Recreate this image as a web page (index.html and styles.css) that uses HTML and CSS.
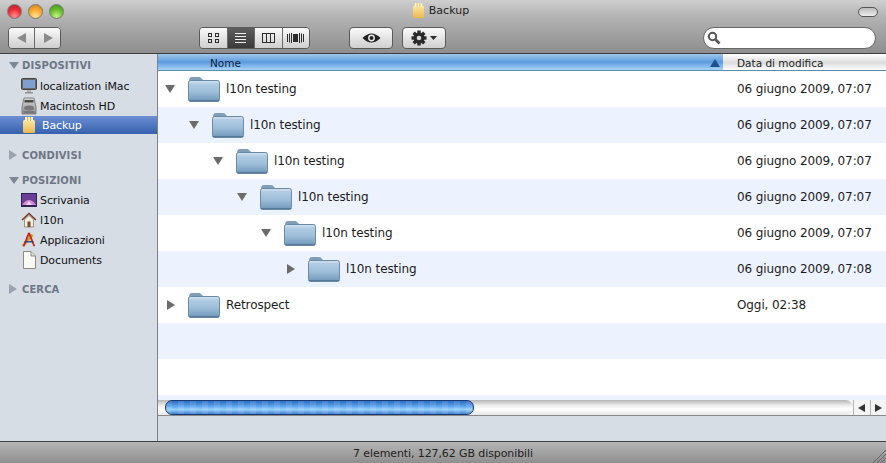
FILE: index.html
```html
<!DOCTYPE html>
<html lang="it">
<head>
  <meta charset="UTF-8" />
  <title>Backup</title>
  <link rel="stylesheet" href="styles.css">
</head>
<body>

<svg class="defs" width="0" height="0" aria-hidden="true">
  <defs>
    <linearGradient id="folderBody" x1="0" y1="0" x2="0" y2="1">
      <stop offset="0" stop-color="#b9d2e6"/>
      <stop offset="0.55" stop-color="#9dbdd8"/>
      <stop offset="1" stop-color="#6f97bb"/>
    </linearGradient>
    <linearGradient id="diskBody" x1="0" y1="0" x2="0" y2="1">
      <stop offset="0" stop-color="#fbe7a6"/>
      <stop offset="1" stop-color="#ecb84e"/>
    </linearGradient>
    <linearGradient id="hdBody" x1="0" y1="0" x2="0" y2="1">
      <stop offset="0" stop-color="#d8d8d8"/>
      <stop offset="1" stop-color="#8f8f8f"/>
    </linearGradient>
    <symbol id="folder" viewBox="0 0 32 26">
      <path d="M1 5 Q1 1 4 1 H11 Q13 1 14 3 L15 4 H29 Q31 4 31 6 V8 H1 Z" fill="#7f9db6"/>
      <rect x="0.5" y="4.5" width="31" height="21" rx="2" fill="url(#folderBody)" stroke="#6d8ba6"/>
      <path d="M1.5 6 H30.5" stroke="#d6e6f2"/>
      <path d="M1 24.6 H31" stroke="#4f7396"/>
    </symbol>
    <symbol id="disk" viewBox="0 0 14 18">
      <rect x="1" y="4" width="12" height="13" rx="1.5" fill="url(#diskBody)"/>
      <rect x="3" y="1" width="8" height="4" fill="#fff3c8"/>
      <rect x="5" y="1" width="1" height="4" fill="#d9b45e"/>
      <rect x="8" y="1" width="1" height="4" fill="#d9b45e"/>
    </symbol>
  </defs>
</svg>

<div class="window">

  <header class="toolbar">
    <div class="titlerow">
      <div class="lights">
        <span class="light red"></span>
        <span class="light amber"></span>
        <span class="light green"></span>
      </div>
      <div class="title">
        <svg class="title-icon" width="13" height="17"><use href="#disk"/></svg>
        Backup
      </div>
      <div class="pill-wrap"><span class="pill"></span></div>
    </div>

    <div class="toolrow">
      <div class="btn-group nav">
        <button class="btn"><svg width="12" height="12" viewBox="0 0 12 12"><path d="M10 1 V11 L1 6 Z" fill="#8b8b8b"/></svg></button>
        <button class="btn"><svg width="12" height="12" viewBox="0 0 12 12"><path d="M2 1 V11 L11 6 Z" fill="#8b8b8b"/></svg></button>
      </div>

      <div class="btn-group views">
        <button class="btn">
          <svg width="13" height="12" viewBox="0 0 13 12" fill="none" stroke="#2c2c2c"><rect x="1.5" y="1.5" width="3" height="3"/><rect x="8.5" y="1.5" width="3" height="3"/><rect x="1.5" y="7.5" width="3" height="3"/><rect x="8.5" y="7.5" width="3" height="3"/></svg>
        </button>
        <button class="btn active">
          <svg width="13" height="12" viewBox="0 0 13 12" stroke="#f2f2f2"><path d="M1 1.5 H12 M1 4.5 H12 M1 7.5 H12 M1 10.5 H12"/></svg>
        </button>
        <button class="btn">
          <svg width="15" height="12" viewBox="0 0 15 12" fill="none" stroke="#2c2c2c"><rect x="1.5" y="1.5" width="12" height="9"/><path d="M5.5 1.5 V10.5 M9.5 1.5 V10.5"/></svg>
        </button>
        <button class="btn">
          <svg width="17" height="12" viewBox="0 0 17 12" fill="#2c2c2c"><rect x="0" y="2" width="1" height="8"/><rect x="2" y="1.500" width="1" height="9"/><rect x="4" y="1" width="1" height="10"/><rect x="6" y="2" width="5" height="8"/><rect x="12" y="1" width="1" height="10"/><rect x="14" y="1.500" width="1" height="9"/><rect x="16" y="2" width="1" height="8"/></svg>
        </button>
      </div>

      <button class="btn single eye">
        <svg width="19" height="12" viewBox="0 0 19 12"><path d="M0.5 6 Q9.5 -3 18.500 6 Q9.5 15 0.5 6 Z" fill="#222"/><circle cx="9.5" cy="6" r="3.4" fill="#eee"/><circle cx="9.5" cy="6" r="2" fill="#222"/></svg>
      </button>

      <button class="btn single gear">
        <svg width="16" height="16" viewBox="0 0 16 16"><g fill="#2a2a2a"><circle cx="8" cy="8" r="5.500"/><rect x="6.300" y="0.500" width="3.400" height="15"/><rect x="6.300" y="0.500" width="3.400" height="15" transform="rotate(45 8 8)"/><rect x="6.300" y="0.500" width="3.400" height="15" transform="rotate(90 8 8)"/><rect x="6.300" y="0.500" width="3.400" height="15" transform="rotate(135 8 8)"/></g><circle cx="8" cy="8" r="2.300" fill="#d8d8d8"/></svg>
        <svg width="7" height="4" viewBox="0 0 7 4"><path d="M0 0 H7 L3.500 4 Z" fill="#2a2a2a"/></svg>
      </button>

      <div class="search">
        <svg width="14" height="14" viewBox="0 0 14 14" fill="none" stroke="#555"><circle cx="5.500" cy="5.500" r="3.700" stroke-width="2"/><path d="M8.500 8.500 L12.500 12.500" stroke-width="2.600"/></svg>
      </div>
    </div>
  </header>

  <div class="main">
    <aside class="sidebar">
      <div class="sb-head first"><span class="tri-down"></span>DISPOSITIVI</div>
      <div class="sb-item">
        <svg width="16" height="16" viewBox="0 0 16 16"><rect x="0.500" y="0.500" width="15" height="11" rx="1" fill="#6a6a6a" stroke="#444"/><rect x="2" y="2" width="12" height="8" fill="#7f9fd0"/><rect x="6" y="12" width="4" height="2" fill="#b5b5b5"/><rect x="4" y="14" width="8" height="1.500" fill="#8f8f8f"/></svg>
        localization iMac
      </div>
      <div class="sb-item">
        <svg width="16" height="18" viewBox="0 0 16 18"><path d="M3 1 H13 L15 10 V17 H1 V10 Z" fill="url(#hdBody)" stroke="#6e6e6e" stroke-width="0.800"/><rect x="3.500" y="3" width="9" height="2.500" fill="#4a4a4a"/><ellipse cx="8" cy="11" rx="5" ry="2.500" fill="#777"/><rect x="2.500" y="14.500" width="11" height="1" fill="#555"/></svg>
        Macintosh HD
      </div>
      <div class="sb-item selected">
        <svg width="14" height="18"><use href="#disk"/></svg>
        Backup
      </div>

      <div class="sb-head condivisi"><span class="tri-right"></span>CONDIVISI</div>

      <div class="sb-head posizioni"><span class="tri-down"></span>POSIZIONI</div>
      <div class="sb-item">
        <svg width="16" height="14" viewBox="0 0 16 14"><rect width="16" height="14" fill="#2b2350"/><rect x="1" y="1" width="14" height="11" fill="#6b3f96"/><path d="M1 12 Q8 2 15 12 Z" fill="#d68ad0"/><path d="M5 12 L8 8 L11 12 Z" fill="#f1d2ee"/></svg>
        Scrivania
      </div>
      <div class="sb-item">
        <svg width="16" height="16" viewBox="0 0 16 16"><path d="M1 8 L8 1.500 L15 8" fill="none" stroke="#7a3a22" stroke-width="1.600"/><path d="M3.500 7.500 L8 3.500 L12.500 7.500 V15 H3.500 Z" fill="#f2ede0" stroke="#6a5a48" stroke-width="0.600"/><rect x="6.500" y="9.500" width="3" height="5.500" fill="#7a4a28"/></svg>
        l10n
      </div>
      <div class="sb-item">
        <svg width="16" height="16" viewBox="0 0 18 18"><path d="M2 16 L13 3" stroke="#c9a336" stroke-width="3"/><path d="M9 1 L3 16 M9 1 L15 16" stroke="#c8241e" stroke-width="2" fill="none"/><path d="M4 11 H14" stroke="#3a3a6a" stroke-width="1.500"/></svg>
        Applicazioni
      </div>
      <div class="sb-item">
        <svg width="14" height="18" viewBox="0 0 14 18"><path d="M1.500 0.500 H9 L13.500 5 V17.500 H1.500 Z" fill="#fbfaf2" stroke="#8a8a80"/><path d="M9 0.500 V5 H13.500" fill="#ddd" stroke="#8a8a80"/></svg>
        Documents
      </div>

      <div class="sb-head cerca"><span class="tri-right"></span>CERCA</div>
    </aside>

    <section class="content">
      <div class="list-head">
        <div class="col-name">Nome<span class="sort-arrow"></span></div>
        <div class="col-date">Data di modifica</div>
      </div>

      <div class="rows">
        <div class="row d0"><span class="tri-open"></span><svg class="folder"><use href="#folder"/></svg><span class="name">l10n testing</span><span class="date">06 giugno 2009, 07:07</span></div>
        <div class="row alt d1"><span class="tri-open"></span><svg class="folder"><use href="#folder"/></svg><span class="name">l10n testing</span><span class="date">06 giugno 2009, 07:07</span></div>
        <div class="row d2"><span class="tri-open"></span><svg class="folder"><use href="#folder"/></svg><span class="name">l10n testing</span><span class="date">06 giugno 2009, 07:07</span></div>
        <div class="row alt d3"><span class="tri-open"></span><svg class="folder"><use href="#folder"/></svg><span class="name">l10n testing</span><span class="date">06 giugno 2009, 07:07</span></div>
        <div class="row d4"><span class="tri-open"></span><svg class="folder"><use href="#folder"/></svg><span class="name">l10n testing</span><span class="date">06 giugno 2009, 07:07</span></div>
        <div class="row alt d5"><span class="tri-closed"></span><svg class="folder"><use href="#folder"/></svg><span class="name">l10n testing</span><span class="date">06 giugno 2009, 07:08</span></div>
        <div class="row d0"><span class="tri-closed"></span><svg class="folder"><use href="#folder"/></svg><span class="name">Retrospect</span><span class="date">Oggi, 02:38</span></div>
        <div class="row alt"></div>
        <div class="row"></div>
        <div class="row alt stub"></div>
      </div>

      <div class="scrollbar">
        <div class="track"><div class="thumb"></div></div>
        <div class="arrows">
          <span class="arrow"><svg width="8" height="8" viewBox="0 0 8 8"><path d="M7 0 V8 L0 4 Z" fill="#333"/></svg></span>
          <span class="arrow"><svg width="8" height="8" viewBox="0 0 8 8"><path d="M1 0 V8 L8 4 Z" fill="#333"/></svg></span>
        </div>
      </div>
      <div class="spare"></div>
    </section>
  </div>

  <footer class="status">
    7 elementi, 127,62 GB disponibili
    <svg class="grip" width="14" height="14" viewBox="0 0 14 14" stroke="#666"><path d="M1 14 L14 1 M5 14 L14 5 M9 14 L14 9"/></svg>
  </footer>

</div>

</body>
</html>
```

FILE: styles.css
```css
* {
  box-sizing: border-box;
}

body {
  margin: 0;
  font-family: "DejaVu Sans", sans-serif;
  color: #1c1c1c;
  overflow: hidden;
}

.defs {
  position: absolute;
}

.window {
  width: 886px;
  height: 463px;
  display: flex;
  flex-direction: column;
}

/* toolbar */
.toolbar {
  height: 54px;
  background: linear-gradient(to bottom, #cfcfcf, #b4b4b4 30%, #8e8e8e);
  border-bottom: 1px solid #3e3e3e;
  padding: 0 8px;
}

.titlerow {
  height: 27px;
  display: grid;
  grid-template-columns: 1fr auto 1fr;
  align-items: center;
  padding-bottom: 5px;
}

.lights {
  display: flex;
  gap: 6px;
  margin-left: -1px;
}

.light {
  width: 15px;
  height: 15px;
  border-radius: 50%;
  border: 1px solid #7a7a7a;
}

.red {
  background: radial-gradient(circle at 50% 85%, #ff8f8f, #ee2f38 50%, #b01c26);
}

.amber {
  background: radial-gradient(circle at 50% 85%, #ffe592, #fbaa2e 50%, #cc7a1a);
}

.green {
  background: radial-gradient(circle at 50% 85%, #c6f58a, #6cc02c 50%, #38901c);
}

.title {
  display: flex;
  align-items: center;
  gap: 4px;
  font-size: 11px;
  color: #222;
  margin-left: -5px;
  margin-top: -2px;
}

.pill-wrap {
  display: flex;
  justify-content: flex-end;
  margin-top: 1px;
}

.pill {
  width: 20px;
  height: 10px;
  border-radius: 5px;
  border: 1px solid #555;
  background: linear-gradient(to bottom, #bbb, #eee);
}

.toolrow {
  display: flex;
  align-items: center;
  height: 22px;
}

.btn-group {
  display: flex;
  height: 22px;
  border: 1px solid #5a5a5a;
  border-radius: 4px;
  overflow: hidden;
}

.btn {
  height: 22px;
  padding: 0;
  border: none;
  display: flex;
  align-items: center;
  justify-content: center;
  background: linear-gradient(to bottom, #fafafa, #cfcfcf);
}

.btn-group .btn {
  height: 20px;
  border-left: 1px solid #6a6a6a;
}

.btn-group .btn:first-child {
  border-left: none;
}

.nav {
  width: 53px;
}

.nav .btn {
  flex: 1;
}

.views {
  width: 111px;
  margin-left: 138px;
}

.views .btn {
  flex: 1;
}

.views .active {
  background: linear-gradient(to bottom, #5e5e5e, #3a3a3a);
}

.single {
  border: 1px solid #5a5a5a;
  border-radius: 4px;
  width: 44px;
}

.eye {
  margin-left: 39px;
}

.gear {
  margin-left: 9px;
  gap: 3px;
}

.search {
  width: 173px;
  height: 22px;
  margin-left: 257px;
  background: #fff;
  border: 1px solid #666;
  border-radius: 11px;
  display: flex;
  align-items: center;
  padding-left: 3px;
}

/* middle part */
.main {
  flex: 1;
  display: flex;
  min-height: 0;
}

.sidebar {
  width: 158px;
  background: #d6dde5;
  border-right: 1px solid #7f8388;
  font-size: 11px;
  padding-top: 3px;
}

.sb-head {
  height: 16px;
  display: flex;
  align-items: center;
  gap: 3px;
  padding-left: 9px;
  font-weight: bold;
  font-size: 10px;
  letter-spacing: 0.1px;
  color: #6d7684;
}

.first {
  margin-bottom: 3px;
}

.condivisi {
  margin-top: 13px;
}

.posizioni {
  margin-top: 9px;
  margin-bottom: 2px;
}

.cerca {
  margin-top: 11px;
}

.tri-down {
  width: 0;
  height: 0;
  border-left: 5px solid transparent;
  border-right: 5px solid transparent;
  border-top: 7px solid #7d8896;
}

.tri-right {
  width: 0;
  height: 0;
  border-top: 5px solid transparent;
  border-bottom: 5px solid transparent;
  border-left: 8px solid #9aa3ae;
  margin-right: 2px;
}

.sb-item {
  height: 20px;
  display: grid;
  grid-template-columns: 16px auto;
  justify-content: start;
  justify-items: center;
  align-items: center;
  column-gap: 3px;
  padding-left: 21px;
  letter-spacing: -0.1px;
  color: #111;
}

.sb-item.selected {
  height: 18px;
  margin-bottom: 2px;
  column-gap: 5px;
  color: #fff;
  background: linear-gradient(to bottom, #6d8fd2, #3561ae);
}

/* file list */
.content {
  flex: 1;
  display: flex;
  flex-direction: column;
  min-width: 0;
  background: #d6dde5;
}

.list-head {
  height: 17px;
  display: flex;
  font-size: 10.5px;
  border-bottom: 1px solid #5f8ba6;
}

.col-name {
  width: 565px;
  display: flex;
  align-items: center;
  justify-content: space-between;
  padding: 1px 3px 0 52px;
  color: #0f1e3c;
  background: linear-gradient(to bottom, #a3c6ea, #5b9ae0 50%, #a8d4f8);
}

.sort-arrow {
  width: 0;
  height: 0;
  border-left: 5px solid transparent;
  border-right: 5px solid transparent;
  border-bottom: 8px solid #1f4f8e;
}

.col-date {
  flex: 1;
  display: flex;
  align-items: center;
  padding: 1px 0 0 14px;
  background: linear-gradient(to bottom, #fff, #dcdcdc 55%, #fff);
}

.rows {
  height: 329px;
  overflow: hidden;
  background: #fff;
}

.row {
  height: 36px;
  display: flex;
  align-items: center;
  font-size: 12px;
  letter-spacing: -0.1px;
}

.row.alt {
  background: #edf3fe;
}

.row.stub {
  height: 5px;
}

.d0 { padding-left: 7px; }
.d1 { padding-left: 31px; }
.d2 { padding-left: 55px; }
.d3 { padding-left: 79px; }
.d4 { padding-left: 103px; }
.d5 { padding-left: 127px; }

.tri-open {
  width: 0;
  height: 0;
  box-sizing: content-box;
  flex: none;
  margin-right: 13px;
  border-left: 5px solid transparent;
  border-right: 5px solid transparent;
  border-top: 8px solid #6b6b6b;
}

.tri-closed {
  width: 0;
  height: 0;
  box-sizing: content-box;
  flex: none;
  margin: 0 13px 0 2px;
  border-top: 5px solid transparent;
  border-bottom: 5px solid transparent;
  border-left: 8px solid #6b6b6b;
}

.folder {
  width: 32px;
  height: 26px;
  flex: none;
  margin-right: 6px;
}

.name {
  flex: 1;
}

.date {
  width: 149px;
  flex: none;
}

.scrollbar {
  height: 16px;
  display: flex;
  background: #f4f4f4;
  border-bottom: 1px solid #8a8a8a;
}

.track {
  flex: 1;
  padding-left: 7px;
  background: linear-gradient(to bottom, #b5b5b5, #ececec 35%, #fff 60%, #e6e6e6);
  border-radius: 0 8px 8px 0;
}

.thumb {
  width: 309px;
  height: 15px;
  border-radius: 7px;
  border: 1px solid #153c74;
  background:
    repeating-linear-gradient(to right, rgba(255, 255, 255, 0.1) 0 6px, rgba(255, 255, 255, 0) 6px 12px),
    linear-gradient(to bottom, #2f6cc0, #5aa2ee 40%, #98d0fa 65%, #3f80d2);
}

.arrows {
  width: 33px;
  display: flex;
}

.arrow {
  flex: 1;
  display: flex;
  align-items: center;
  justify-content: center;
  border-left: 1px solid #b5b5b5;
}

.spare {
  flex: 1;
}

.status {
  position: relative;
  height: 22px;
  flex: none;
  display: flex;
  align-items: center;
  justify-content: center;
  padding-top: 1px;
  font-size: 11px;
  letter-spacing: -0.1px;
  color: #222;
  border-top: 1px solid #3e3e3e;
  background: linear-gradient(to bottom, #b5b5b5, #8f8f8f);
}

.grip {
  position: absolute;
  right: 0;
  bottom: 0;
}
```
